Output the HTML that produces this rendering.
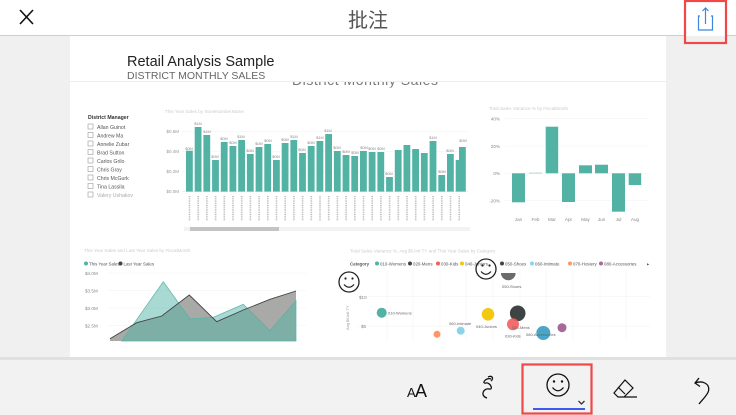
<!DOCTYPE html>
<html><head><meta charset="utf-8"><style>
html,body{margin:0;padding:0;width:736px;height:415px;overflow:hidden;background:#fff}
svg{display:block}
text{font-family:"Liberation Sans",sans-serif}
</style></head><body>
<svg width="736" height="415" viewBox="0 0 736 415" xmlns="http://www.w3.org/2000/svg">
<rect x="0" y="0" width="736" height="35" fill="#fff"/>
<path d="M20 10 L33 24 M33 10 L20 24" stroke="#111" stroke-width="1.6" fill="none"/>
<text x="368" y="27" text-anchor="middle" font-size="20" fill="#555" style='font-family:"Liberation Sans","Noto Sans CJK SC",sans-serif'>批注</text>
<rect x="0" y="36" width="736" height="322" fill="#f0f0f0"/>
<rect x="70" y="36" width="596" height="321" fill="#fff"/>
<rect x="0" y="35" width="685" height="1" fill="#cfcfcf"/>
<rect x="727" y="35" width="9" height="1" fill="#cfcfcf"/>
<rect x="685" y="1" width="41" height="42" fill="none" stroke="#f04848" stroke-width="2.2"/>
<path d="M700 16 H698.5 V30 H712.5 V16 H711 M705.5 24 V8 M702.5 11 L705.5 8 L708.5 11" stroke="#3b87e0" stroke-width="1.2" fill="none"/>
<text x="127" y="66" font-size="14.5" fill="#222">Retail Analysis Sample</text>
<text x="127" y="79" font-size="10.5" fill="#666">DISTRICT MONTHLY SALES</text>
<clipPath id="c1"><rect x="280" y="81.5" width="200" height="6"/></clipPath>
<text x="292" y="85" font-size="14" fill="#777" clip-path="url(#c1)" textLength="146">District Monthly Sales</text>
<rect x="70" y="81" width="596" height="1" fill="#eee"/>
<g font-size="5.2" fill="#555">
<text x="88" y="119" fill="#333" font-weight="bold">District Manager</text>
<g fill="none" stroke="#999" stroke-width=".6">
<rect x="88" y="124" width="5" height="5"/><rect x="88" y="132.5" width="5" height="5"/><rect x="88" y="141" width="5" height="5"/><rect x="88" y="149.5" width="5" height="5"/><rect x="88" y="158" width="5" height="5"/><rect x="88" y="166.5" width="5" height="5"/><rect x="88" y="175" width="5" height="5"/><rect x="88" y="183.5" width="5" height="5"/><rect x="88" y="192" width="5" height="5"/>
</g>
<text x="97" y="129">Allan Guinot</text><text x="97" y="137.5">Andrew Ma</text><text x="97" y="146">Annelie Zubar</text><text x="97" y="154.5">Brad Sutton</text><text x="97" y="163">Carlos Grilo</text><text x="97" y="171.5">Chris Gray</text><text x="97" y="180">Chris McGurk</text><text x="97" y="188.5">Tina Lassila</text><text x="97" y="197" fill="#aaa">Valery Ushakov</text>
</g>
<text x="165" y="113" font-size="4.6" fill="#ccc">This Year Sales by StoreNumberName</text>
<g stroke="#f0f0f0" stroke-width=".5"><line x1="182" y1="131.5" x2="468" y2="131.5"/><line x1="182" y1="151.5" x2="468" y2="151.5"/><line x1="182" y1="171.5" x2="468" y2="171.5"/></g>
<g font-size="4.5" fill="#999" text-anchor="end"><text x="179" y="133">$0.6M</text><text x="179" y="153">$0.4M</text><text x="179" y="173">$0.2M</text><text x="179" y="193">$0.0M</text></g>
<g fill="#52b3a5">
<rect x="186" y="150.7" width="6.8" height="40.8"/><rect x="194.7" y="127" width="6.8" height="64.5"/><rect x="203.4" y="135" width="6.8" height="56.5"/><rect x="212.1" y="160" width="6.8" height="31.5"/><rect x="220.8" y="142" width="6.8" height="49.5"/><rect x="229.5" y="146" width="6.8" height="45.5"/><rect x="238.2" y="140" width="6.8" height="51.5"/><rect x="246.9" y="154" width="6.8" height="37.5"/><rect x="255.6" y="147" width="6.8" height="44.5"/><rect x="264.3" y="144" width="6.8" height="47.5"/><rect x="273" y="160" width="6.8" height="31.5"/><rect x="281.7" y="143" width="6.8" height="48.5"/><rect x="290.4" y="140" width="6.8" height="51.5"/><rect x="299.1" y="153" width="6.8" height="38.5"/><rect x="307.8" y="146" width="6.8" height="45.5"/><rect x="316.5" y="141" width="6.8" height="50.5"/><rect x="325.2" y="134" width="6.8" height="57.5"/><rect x="333.9" y="151" width="6.8" height="40.5"/><rect x="342.6" y="155" width="6.8" height="36.5"/><rect x="351.3" y="156" width="6.8" height="35.5"/><rect x="360" y="151" width="6.8" height="40.5"/><rect x="368.7" y="152" width="6.8" height="39.5"/><rect x="377.4" y="152" width="6.8" height="39.5"/><rect x="386.1" y="177" width="6.8" height="14.5"/><rect x="394.8" y="150" width="6.8" height="41.5"/><rect x="403.5" y="145" width="6.8" height="46.5"/><rect x="412.2" y="149" width="6.8" height="42.5"/><rect x="420.9" y="153" width="6.8" height="38.5"/><rect x="429.6" y="141" width="6.8" height="50.5"/><rect x="438.3" y="175" width="6.8" height="16.5"/><rect x="447" y="154" width="6.8" height="37.5"/><rect x="455.7" y="160" width="6.8" height="31.5"/><rect x="459" y="147" width="6.8" height="44.5"/>
</g>
<rect x="182" y="191.5" width="286" height=".6" fill="#ddd"/>
<g font-size="3.8" fill="#888" text-anchor="middle">
<text x="189" y="150">$0M</text><text x="198" y="125">$1M</text><text x="207" y="133">$1M</text><text x="215" y="158">$0M</text><text x="224" y="140">$0M</text><text x="233" y="144">$0M</text><text x="241" y="138">$1M</text><text x="250" y="152">$0M</text><text x="259" y="145">$0M</text><text x="268" y="142">$0M</text><text x="276" y="158">$0M</text><text x="285" y="141">$0M</text><text x="294" y="138">$1M</text><text x="302" y="151">$0M</text><text x="311" y="144">$0M</text><text x="320" y="139">$1M</text><text x="337" y="149">$0M</text><text x="346" y="153">$0M</text><text x="355" y="154">$0M</text><text x="328" y="132">$1M</text><text x="364" y="149">$0M</text><text x="372" y="150">$0M</text><text x="381" y="150">$0M</text><text x="389" y="175">$0M</text><text x="442" y="173">$0M</text><text x="450" y="152">$0M</text><text x="433" y="139">$1M</text><text x="463" y="142">$0M</text>
</g>
<g stroke="#bbb" stroke-dasharray="1 0.8" stroke-width="1.6">
<path d="M189.5 196v25M198.2 196v25M206.9 196v25M215.6 196v25M224.3 196v25M233 196v25M241.7 196v25M250.4 196v25M259.1 196v25M267.8 196v25M276.5 196v25M285.2 196v25M293.9 196v25M302.6 196v25M311.3 196v25M320 196v25M328.7 196v25M337.4 196v25M346.1 196v25M354.8 196v25M363.5 196v25M372.2 196v25M380.9 196v25M389.6 196v25M398.3 196v25M407 196v25M415.7 196v25M424.4 196v25M433.1 196v25M441.8 196v25M450.5 196v25M459.2 196v25"/>
</g>
<rect x="184" y="227" width="286" height="4" fill="#f2f2f2"/>
<rect x="190" y="227" width="89" height="4" fill="#c4c4c4"/>
<text x="489" y="110" font-size="4.6" fill="#ccc">Total Sales Variance % by FiscalMonth</text>
<g stroke="#f0f0f0" stroke-width=".5"><line x1="505" y1="118.7" x2="648" y2="118.7"/><line x1="505" y1="146" x2="648" y2="146"/><line x1="505" y1="173.3" x2="648" y2="173.3"/><line x1="505" y1="200.7" x2="648" y2="200.7"/></g>
<g font-size="4.6" fill="#888" text-anchor="end"><text x="500" y="120.5">40%</text><text x="500" y="148">20%</text><text x="500" y="175">0%</text><text x="500" y="202.5">-20%</text></g>
<g fill="#52b3a5">
<rect x="512" y="173.3" width="13" height="29"/><rect x="529" y="172.6" width="13" height="1" fill="#a8dad2"/><rect x="545.7" y="126.7" width="12.5" height="46.6"/><rect x="562" y="173.3" width="13" height="28.7"/><rect x="579" y="165.3" width="13" height="8"/><rect x="595" y="164.7" width="13" height="8.6"/><rect x="612" y="173.3" width="13" height="38.4"/><rect x="628.7" y="173.3" width="12.5" height="11.7"/>
</g>
<g font-size="4.6" fill="#888" text-anchor="middle"><text x="518.5" y="221">Jan</text><text x="535.5" y="221">Feb</text><text x="552" y="221">Mar</text><text x="568.5" y="221">Apr</text><text x="585.5" y="221">May</text><text x="601.5" y="221">Jun</text><text x="618.5" y="221">Jul</text><text x="635" y="221">Aug</text></g>
<text x="84" y="252" font-size="4.6" fill="#ccc">This Year Sales and Last Year Sales by FiscalMonth</text>
<circle cx="86" cy="263.5" r="2" fill="#52b3a5"/><text x="89" y="265.3" font-size="4.4" fill="#555">This Year Sales</text>
<circle cx="120.5" cy="263.5" r="2" fill="#444"/><text x="123.5" y="265.3" font-size="4.4" fill="#555">Last Year Sales</text>
<g stroke="#f0f0f0" stroke-width=".5"><line x1="108" y1="273" x2="306" y2="273"/><line x1="108" y1="290.7" x2="306" y2="290.7"/><line x1="108" y1="308" x2="306" y2="308"/><line x1="108" y1="325.7" x2="306" y2="325.7"/></g>
<g font-size="4.6" fill="#888"><text x="85" y="275">$4.0M</text><text x="85" y="292.5">$3.5M</text><text x="85" y="310">$3.0M</text><text x="85" y="327.5">$2.5M</text></g>
<path d="M110 338.7 L136.7 322.7 L161.7 316 L189.3 295 L216.7 321.7 L243.3 310 L270 299.3 L296 291 L296 341 L110 341Z" fill="#a9aaa7"/>
<path d="M121.7 341 L163.3 281.7 L190 319 L213.3 317.3 L243.3 304.3 L270 330.7 L296 300.7 L296 341Z" fill="#52b3a5" fill-opacity=".5" stroke="#52b3a5" stroke-width=".7"/>
<path d="M110 338.7 L136.7 322.7 L161.7 316 L189.3 295 L216.7 321.7 L243.3 310 L270 299.3 L296 291" fill="none" stroke="#444" stroke-width=".9"/>
<text x="350" y="252.5" font-size="4.6" fill="#ccc">Total Sales Variance %, Avg $/Unit TY and This Year Sales by Category</text>
<g font-size="4.4" fill="#555"><text x="350" y="265.3" font-weight="bold">Category</text>
<circle cx="377" cy="263.5" r="2" fill="#52b3a5"/><text x="380" y="265.3">010-Womens</text>
<circle cx="410" cy="263.5" r="2" fill="#444"/><text x="413" y="265.3">020-Mens</text>
<circle cx="438" cy="263.5" r="2" fill="#f25e5e"/><text x="441" y="265.3">030-Kids</text>
<circle cx="462" cy="263.5" r="2" fill="#f2c811"/><text x="465" y="265.3">040-Juniors</text>
<circle cx="502" cy="263.5" r="2" fill="#444"/><text x="505" y="265.3">050-Shoes</text>
<circle cx="532" cy="263.5" r="2" fill="#8ad4eb"/><text x="535" y="265.3">060-Intimate</text>
<circle cx="570" cy="263.5" r="2" fill="#fe9666"/><text x="573" y="265.3">070-Hosiery</text>
<circle cx="601" cy="263.5" r="2" fill="#a66999"/><text x="604" y="265.3">080-Accessories</text>
<text x="647" y="265.3">▸</text></g>
<g stroke="#f0f0f0" stroke-width=".5"><line x1="357" y1="296.7" x2="650" y2="296.7"/><line x1="357" y1="326" x2="650" y2="326"/><line x1="387" y1="270" x2="387" y2="341"/><line x1="413" y1="270" x2="413" y2="341"/><line x1="440" y1="270" x2="440" y2="341"/><line x1="466" y1="270" x2="466" y2="341"/><line x1="493" y1="270" x2="493" y2="341"/><line x1="520" y1="270" x2="520" y2="341"/><line x1="546" y1="270" x2="546" y2="341"/><line x1="573" y1="270" x2="573" y2="341"/><line x1="600" y1="270" x2="600" y2="341"/><line x1="626" y1="270" x2="626" y2="341"/></g>
<g font-size="4.6" fill="#888"><text x="359" y="299">$10</text><text x="361" y="328">$5</text></g>
<text x="0" y="0" font-size="4" fill="#999" transform="translate(349 330) rotate(-90)">Avg $/Unit TY</text>
<circle cx="381.7" cy="312.7" r="5" fill="#52b3a5"/><text x="388" y="314.5" font-size="4" fill="#666">010-Womens</text>
<path d="M501 273 A7.3 7.3 0 0 0 515.6 273Z" fill="#6b6b6b"/><text x="502" y="288" font-size="4" fill="#666">050-Shoes</text>
<circle cx="437" cy="334.3" r="3.5" fill="#fe9666"/>
<circle cx="460.7" cy="330.7" r="4" fill="#8ad4eb"/><text x="449" y="325" font-size="4" fill="#666">060-Intimate</text>
<circle cx="488" cy="314.3" r="6.3" fill="#f2c811"/><text x="476" y="328" font-size="4" fill="#666">040-Juniors</text>
<circle cx="517.7" cy="313.3" r="7.8" fill="#3d4443"/>
<circle cx="513" cy="324.3" r="6" fill="#f25e5e" fill-opacity=".9"/><text x="512" y="329" font-size="4" fill="#666">020-Mens</text><text x="505" y="337.5" font-size="4" fill="#666">030-Kids</text>
<circle cx="543.3" cy="333" r="7" fill="#4aa5c9"/><text x="526" y="336" font-size="4" fill="#666">080-Accessories</text>
<circle cx="562" cy="327.7" r="4.5" fill="#a66999"/>
<g fill="none" stroke="#222" stroke-width="1.3">
<circle cx="349" cy="282" r="10"/><path d="M344 284.5 Q349 290 354 284.5"/>
<circle cx="486" cy="269" r="10"/><path d="M481 271.5 Q486 277 491 271.5"/>
</g>
<g fill="#222"><circle cx="345.5" cy="278.5" r="1.1"/><circle cx="352.5" cy="278.5" r="1.1"/><circle cx="482.5" cy="265.5" r="1.1"/><circle cx="489.5" cy="265.5" r="1.1"/></g>
<rect x="0" y="357" width="736" height="3" fill="#e0e0e0"/>
<rect x="0" y="360" width="736" height="55" fill="#f2f2f2"/>
<text x="407" y="397" font-size="13" fill="#111">A</text><text x="415" y="397" font-size="18" fill="#111">A</text>
<path d="M487 398 C480 396 483 388 489 389 C494 390 490 382 486 383 C481 384 486 377 491 379 M488 377 C492 375 494 378 491 381" fill="none" stroke="#111" stroke-width="1.3"/>
<rect x="522.5" y="364.5" width="69" height="49" fill="none" stroke="#f04848" stroke-width="2.2"/>
<rect x="533" y="408" width="52" height="2" fill="#3d5af1"/>
<circle cx="558" cy="385" r="11" fill="none" stroke="#111" stroke-width="1.3"/>
<path d="M552.5 387.5 Q558 394 563.5 387.5" fill="none" stroke="#111" stroke-width="1.3"/>
<circle cx="554" cy="381.5" r="1.2" fill="#111"/><circle cx="562" cy="381.5" r="1.2" fill="#111"/>
<path d="M578.5 401 L581.5 404 L584.5 401" fill="none" stroke="#333" stroke-width="1.3"/>
<path d="M625 380 L633 388 L624 397 L618 397 L614 393 Z M618 387 L625 394 M619 397 L637 397" fill="none" stroke="#111" stroke-width="1.2"/>
<path d="M699 378 L695 383 L700 386.5 M695 383 C703 380 710 384 708.5 391 C707.5 395 703 399 699 404" fill="none" stroke="#111" stroke-width="1.3"/>
</svg>
</body></html>
